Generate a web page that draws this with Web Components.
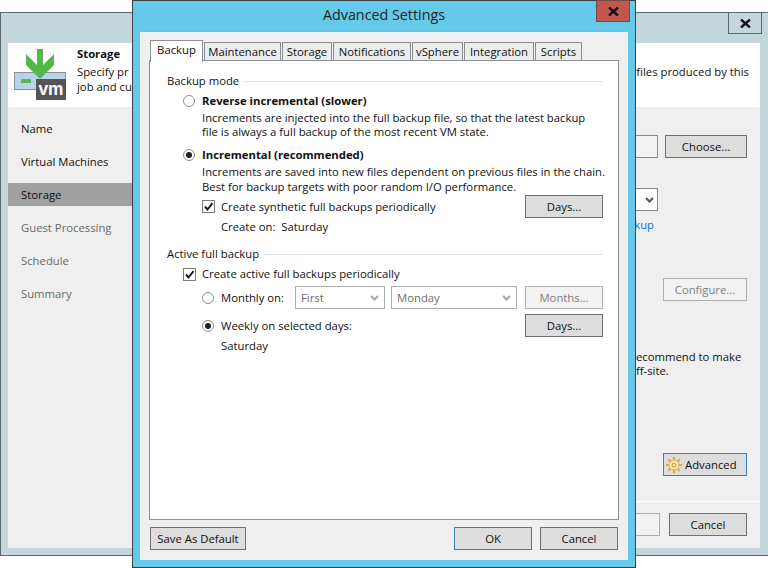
<!DOCTYPE html>
<html><head><meta charset="utf-8">
<style>
html,body{margin:0;padding:0;background:#fff}
body{width:768px;height:568px;overflow:hidden;position:relative;font:11.3px/14px "Open Sans","Noto Sans",sans-serif;color:#111}
</style></head><body>
<app-wizard></app-wizard>
<app-dialog></app-dialog>
<script>
function def(name,css,html,setup){
  customElements.define(name,class extends HTMLElement{
    connectedCallback(){
      if(this.shadowRoot)return;
      const r=this.attachShadow({mode:'open'});
      r.innerHTML='<style>'+css+'</style>'+(typeof html==='function'?html(this):html);
      if(setup)setup(this,r);
    }
  });
}
const closeX='<svg width="11" height="9" viewBox="0 0 11 9"><path d="M1 .5 L10 8.5 M10 .5 L1 8.5" stroke="#111" stroke-width="2.4" fill="none"/></svg>';

def('ui-btn',`
:host{display:inline-flex;align-items:center;justify-content:center;box-sizing:border-box;width:78px;height:23px;border:1px solid #707070;background:#dddddd;color:#111;flex:none;gap:3px;white-space:nowrap}
:host([primary]){border-color:#3c7fb1}
:host([disabled]){border-color:#adadad;background:#f2f2f2;color:#808080}
`,'<slot></slot>');

def('ui-radio',`
:host{display:flex;align-items:center;height:14px;gap:7px;flex:none;white-space:nowrap}
.c{width:12px;height:12px;flex:none}
:host([bold]) .t{font-weight:700}
`,e=>`<svg class="c" viewBox="0 0 12 12"><circle cx="6" cy="6" r="5.5" fill="#fff" stroke="#8c8c8c"/>${e.hasAttribute('checked')?'<circle cx="6" cy="6" r="3" fill="#222"/>':''}</svg><span class="t"><slot></slot></span>`);

def('ui-check',`
:host{display:flex;align-items:center;height:14px;gap:6px;flex:none;white-space:nowrap}
svg{width:13px;height:13px;flex:none}
`,`<svg viewBox="0 0 13 13"><rect x=".5" y=".5" width="12" height="12" fill="#fff" stroke="#7d7d7d"/><path d="M3 6.5 L5.5 9.5 L10.5 3.2" fill="none" stroke="#1c1c1c" stroke-width="2"/></svg><span><slot></slot></span>`);

def('ui-select',`
:host{display:flex;align-items:center;justify-content:space-between;box-sizing:border-box;height:23px;border:1px solid #adadad;background:#fff;color:#6d6d6d;padding:0 5px 0 5px;flex:none}
svg{width:9px;height:6px}
`,`<span><slot></slot></span><svg viewBox="0 0 9 6"><path d="M1 1 L4.5 4.5 L8 1" fill="none" stroke="#a8a8a8" stroke-width="2"/></svg>`);

def('ui-group',`
:host{display:flex;align-items:center;gap:5px;height:14px}
i{flex:1;height:1px;background:#dbe3e9}
`,`<span><slot></slot></span><i></i>`);

def('ui-tab',`
:host{display:flex;align-items:center;justify-content:center;box-sizing:border-box;height:19px;border:1px solid #8b8e96;border-bottom:none;background:#ececec;margin-right:1px;margin-top:2px;flex:none}
:host([selected]){height:22px;margin-top:0;margin-bottom:-1px;background:#fff;padding-bottom:3px;position:relative;z-index:1}
`,'<slot></slot>');

def('nav-item',`
:host{display:flex;align-items:center;height:23px;padding-left:13px;margin-bottom:10px;color:#111}
:host([off]){color:#6a6a6a}
:host([on]){background:#a0a0a0}
`,'<slot></slot>');

def('vm-logo',`
:host{display:block;width:56px;height:56px;flex:none}
svg{display:block}
text{font:700 19px "Liberation Sans",sans-serif;fill:#fff}
`,`<svg width="56" height="56" viewBox="0 0 56 56">
<rect x=".5" y="23.5" width="51" height="17" fill="#b8d3ee" stroke="#8b9094"/>
<rect x="7" y="30" width="10" height="4" fill="#54b948"/>
<path d="M23 0 H29 V16 L34 11 L40 5 V16 L26 30 L12 16 V5 L18 11 L23 16 Z" fill="#54b948"/>
<rect x="22" y="30" width="30" height="21" fill="#555"/>
<text x="24.5" y="46" textLength="25" lengthAdjust="spacingAndGlyphs">vm</text></svg>`);

def('gear-icon',`:host{display:block;width:16px;height:16px;flex:none}svg{display:block}`,
`<svg width="16" height="16" viewBox="0 0 16 16"><g stroke="#e2a733" stroke-width="2.2"><path d="M8 0V16M0 8H16M2.3 2.3L13.7 13.7M13.7 2.3L2.3 13.7"/></g><circle cx="8" cy="8" r="5.6" fill="#eebb55"/><circle cx="8" cy="8" r="4" fill="#fdf6e3"/><circle cx="8" cy="8" r="2.6" fill="#e6a32e"/><circle cx="8" cy="8" r="1.2" fill="#fdf0cf"/></svg>`);

def('app-wizard',`
:host{display:block;position:absolute;left:0;top:12px;width:790px;height:544px;box-sizing:border-box;border:1px solid #5f686c;background:#c3d6dc}
.bar{height:30px;display:flex;justify-content:flex-end}
.x{box-sizing:border-box;width:34px;height:22px;margin:-1px 27px 0 0;border:1px solid #5f686c;display:flex;align-items:center;justify-content:center}
.client{margin:0 29px 0 7px;width:752px;height:505px;background:#efefef;display:flex;flex-direction:column}
.head{height:64px;background:#fff;display:flex;box-sizing:border-box;padding:6px 0 0 6px;position:relative}
.ht{margin-left:7px;display:flex;flex-direction:column;line-height:15px}
.ht b{height:14px;margin-top:-2px;margin-bottom:3px;line-height:14px}
.ptail{margin-left:auto;margin-right:11px;margin-top:16px;white-space:nowrap}
.body{flex:1;display:flex;min-height:0}
nav{width:124px;padding-top:10px;flex:none}
main{flex:1;display:flex;flex-direction:column;align-items:flex-end;padding-right:13px;box-sizing:border-box}
.r{display:flex;justify-content:flex-end;gap:7px;width:100%}
.inp{box-sizing:border-box;width:30px;height:23px;background:#f2f2f2;border:1px solid #8a8a8a}
.sel{box-sizing:border-box;width:30px;height:23px;background:#fff;border:1px solid #8a8a8a;display:flex;align-items:center;justify-content:flex-end;padding-right:3px;margin-right:89px}
.link{color:#0a6edb;margin-right:93px}
.foot{border-top:1px solid #fff;margin-top:25px;margin-right:-13px;width:calc(100% + 13px);height:46px;box-sizing:border-box;padding:11px 13px 0 0;display:flex;justify-content:flex-end;gap:9px}
.txt{width:111px;text-align:left;white-space:nowrap}
.adv{width:84px;border-color:#3c7fb1;justify-content:flex-start;padding-left:2px}
`,`
<div class="bar"><div class="x">${closeX}</div></div>
<div class="client">
 <div class="head"><vm-logo></vm-logo>
  <div class="ht"><b>Storage</b><span>Specify pr</span><span>job and cu</span></div>
  <span class="ptail">files produced by this</span>
 </div>
 <div class="body">
  <nav><nav-item>Name</nav-item><nav-item>Virtual Machines</nav-item><nav-item on>Storage</nav-item><nav-item off>Guest Processing</nav-item><nav-item off>Schedule</nav-item><nav-item off>Summary</nav-item></nav>
  <main>
   <div class="r" style="margin-top:28px"><div class="inp"></div><ui-btn style="width:82px">Choose...</ui-btn></div>
   <div class="r" style="margin-top:30px"><div class="sel"><svg width="9" height="6" viewBox="0 0 9 6"><path d="M1 1 L4.5 4.5 L8 1" fill="none" stroke="#555" stroke-width="2"/></svg></div></div>
   <div class="r" style="margin-top:7px"><span class="link">kup</span></div>
   <div class="r" style="margin-top:46px"><ui-btn disabled style="width:84px">Configure...</ui-btn></div>
   <div class="r" style="margin-top:49px"><span class="txt">ecommend to make</span></div>
   <div class="r"><span class="txt">ff-site.</span></div>
   <div class="r" style="margin-top:75px"><ui-btn class="adv"><gear-icon></gear-icon>Advanced</ui-btn></div>
   <div class="foot"><ui-btn disabled style="width:78px">&nbsp;</ui-btn><ui-btn>Cancel</ui-btn></div>
  </main>
 </div>
</div>`);

def('app-dialog',`
:host{display:flex;flex-direction:column;position:absolute;left:132px;top:0;width:504px;height:568px;box-sizing:border-box;border:1px solid #3a4248;background:#65c9ea}
.bar{height:30px;box-sizing:border-box;padding-bottom:3px;display:flex;align-items:center;justify-content:center;position:relative;flex:none;font-size:14.3px;color:#222}
.x{position:absolute;right:5px;top:-1px;box-sizing:border-box;width:34px;height:22px;background:#c0574e;border:1px solid #7a4a48;display:flex;align-items:center;justify-content:center}
.client{margin:0 7px 7px 7px;flex:1;background:#efefef;border-top:1px solid #8fb3c4;padding:8px 9px 0 9px;display:flex;flex-direction:column;min-height:0}
.tabs{display:flex;height:21px;flex:none;padding-left:1px}
.panel{box-sizing:border-box;height:460px;flex:none;border:1px solid #8b8e96;background:#fff;padding:13px 15px 0 17px;display:flex;flex-direction:column;margin-top:-1px}
.l{height:14px;flex:none;white-space:nowrap}
.in1{margin-left:16px}
.in2{margin-left:35px}
.in3{margin-left:54px}
.row{display:flex;align-items:center;flex:none}
.row ui-btn{margin-left:auto}
.acts{display:flex;margin-top:7px;gap:8px;flex:none;padding:0 1px 0 1px}
.acts ui-btn:first-child{margin-right:auto}
`,`
<div class="bar">Advanced Settings<div class="x">${closeX}</div></div>
<div class="client">
 <div class="tabs">
  <ui-tab selected style="width:53px">Backup</ui-tab><ui-tab style="width:77px">Maintenance</ui-tab><ui-tab style="width:50px">Storage</ui-tab><ui-tab style="width:78px">Notifications</ui-tab><ui-tab style="width:51px">vSphere</ui-tab><ui-tab style="width:70px">Integration</ui-tab><ui-tab style="width:47px">Scripts</ui-tab>
 </div>
 <div class="panel">
  <ui-group>Backup mode</ui-group>
  <ui-radio bold class="in1" style="margin-top:6px">Reverse incremental (slower)</ui-radio>
  <div class="l in2" style="margin-top:3px">Increments are injected into the full backup file, so that the latest backup</div>
  <div class="l in2">file is always a full backup of the most recent VM state.</div>
  <ui-radio bold checked class="in1" style="margin-top:9px">Incremental (recommended)</ui-radio>
  <div class="l in2" style="margin-top:3px">Increments are saved into new files dependent on previous files in the chain.</div>
  <div class="l in2" style="margin-top:1px">Best for backup targets with poor random I/O performance.</div>
  <div class="row in2" style="margin-top:1px;height:23px"><ui-check>Create synthetic full backups periodically</ui-check><ui-btn>Days...</ui-btn></div>
  <div class="l in3" style="margin-top:2px">Create on:&nbsp; Saturday</div>
  <ui-group style="margin-top:13px">Active full backup</ui-group>
  <ui-check class="in1" style="margin-top:6px">Create active full backups periodically</ui-check>
  <div class="row in2" style="margin-top:5px;height:23px"><ui-radio style="width:93px">Monthly on:</ui-radio><ui-select style="width:90px;margin-right:6px">First</ui-select><ui-select style="width:126px">Monday</ui-select><ui-btn disabled>Months...</ui-btn></div>
  <div class="row in2" style="margin-top:5px;height:23px"><ui-radio checked>Weekly on selected days:</ui-radio><ui-btn>Days...</ui-btn></div>
  <div class="l in3" style="margin-top:2px">Saturday</div>
 </div>
 <div class="acts"><ui-btn style="width:96px">Save As Default</ui-btn><ui-btn primary>OK</ui-btn><ui-btn>Cancel</ui-btn></div>
</div>`);
</script>
</body></html>
